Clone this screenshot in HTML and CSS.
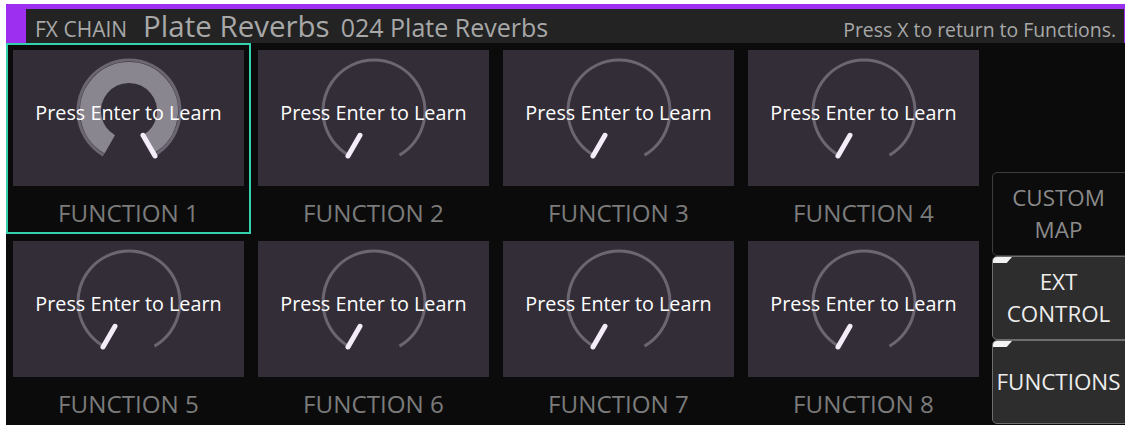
FILE: index.html
```html
<!DOCTYPE html>
<html>
<head>
<meta charset="utf-8">
<link rel="stylesheet" href="styles.css">
</head>
<body>
<div class="screen">
  <div class="topbar">
    <div class="header">
      <span class="hd-section">FX CHAIN</span>
      <span class="hd-title">Plate Reverbs</span>
      <span class="hd-preset">024 Plate Reverbs</span>
      <span class="hd-hint">Press X to return to Functions.</span>
    </div>
  </div>
  <div class="main">
    <div class="grid">
      <div class="cell selected">
        <div class="card">
          <svg class="knob" viewBox="0 0 120 120" width="120" height="120">
            <path class="track" d="M34.5 104.17 A51 51 0 1 1 85.5 104.17"/>
            <path class="fill" d="M40.75 93.34 A38.5 38.5 0 1 1 79.25 93.34"/>
            <line class="needle" x1="74" y1="84.25" x2="86" y2="105"/>
          </svg>
          <div class="learn">Press Enter to Learn</div>
        </div>
        <div class="label">FUNCTION 1</div>
      </div>
      <div class="cell">
        <div class="card">
          <svg class="knob" viewBox="0 0 120 120" width="120" height="120">
            <path class="track" d="M34.5 104.17 A51 51 0 1 1 85.5 104.17"/>
            <line class="needle" x1="46" y1="84.25" x2="34" y2="105"/>
          </svg>
          <div class="learn">Press Enter to Learn</div>
        </div>
        <div class="label">FUNCTION 2</div>
      </div>
      <div class="cell">
        <div class="card">
          <svg class="knob" viewBox="0 0 120 120" width="120" height="120">
            <path class="track" d="M34.5 104.17 A51 51 0 1 1 85.5 104.17"/>
            <line class="needle" x1="46" y1="84.25" x2="34" y2="105"/>
          </svg>
          <div class="learn">Press Enter to Learn</div>
        </div>
        <div class="label">FUNCTION 3</div>
      </div>
      <div class="cell">
        <div class="card">
          <svg class="knob" viewBox="0 0 120 120" width="120" height="120">
            <path class="track" d="M34.5 104.17 A51 51 0 1 1 85.5 104.17"/>
            <line class="needle" x1="46" y1="84.25" x2="34" y2="105"/>
          </svg>
          <div class="learn">Press Enter to Learn</div>
        </div>
        <div class="label">FUNCTION 4</div>
      </div>
      <div class="cell">
        <div class="card">
          <svg class="knob" viewBox="0 0 120 120" width="120" height="120">
            <path class="track" d="M34.5 104.17 A51 51 0 1 1 85.5 104.17"/>
            <line class="needle" x1="46" y1="84.25" x2="34" y2="105"/>
          </svg>
          <div class="learn">Press Enter to Learn</div>
        </div>
        <div class="label">FUNCTION 5</div>
      </div>
      <div class="cell">
        <div class="card">
          <svg class="knob" viewBox="0 0 120 120" width="120" height="120">
            <path class="track" d="M34.5 104.17 A51 51 0 1 1 85.5 104.17"/>
            <line class="needle" x1="46" y1="84.25" x2="34" y2="105"/>
          </svg>
          <div class="learn">Press Enter to Learn</div>
        </div>
        <div class="label">FUNCTION 6</div>
      </div>
      <div class="cell">
        <div class="card">
          <svg class="knob" viewBox="0 0 120 120" width="120" height="120">
            <path class="track" d="M34.5 104.17 A51 51 0 1 1 85.5 104.17"/>
            <line class="needle" x1="46" y1="84.25" x2="34" y2="105"/>
          </svg>
          <div class="learn">Press Enter to Learn</div>
        </div>
        <div class="label">FUNCTION 7</div>
      </div>
      <div class="cell">
        <div class="card">
          <svg class="knob" viewBox="0 0 120 120" width="120" height="120">
            <path class="track" d="M34.5 104.17 A51 51 0 1 1 85.5 104.17"/>
            <line class="needle" x1="46" y1="84.25" x2="34" y2="105"/>
          </svg>
          <div class="learn">Press Enter to Learn</div>
        </div>
        <div class="label">FUNCTION 8</div>
      </div>
    </div>
    <div class="side">
      <div class="btn btn-off">CUSTOM<br>MAP</div>
      <div class="btn btn-on">EXT<br>CONTROL</div>
      <div class="btn btn-on">FUNCTIONS</div>
    </div>
  </div>
</div>
</body>
</html>
```

FILE: styles.css
```css
* { box-sizing: border-box; }

html, body {
  margin: 0;
  padding: 0;
  background: #ffffff;
}

body {
  padding: 4px 0 0 6px;
  font-family: "Open Sans", "Noto Sans", sans-serif;
}

.screen {
  width: 1119px;
  height: 421px;
  background: #0b0b0b;
  overflow: hidden;
  display: flex;
  flex-direction: column;
}

.topbar {
  height: 39px;
  flex: none;
  background: #9d2ff0;
  padding: 5px 1px 0 20px;
}

.header {
  height: 34px;
  background: #232323;
  color: #a8a8a8;
  display: flex;
  align-items: baseline;
  padding: 0 8px 0 9px;
  white-space: nowrap;
  line-height: 34px;
}

.hd-section { font-size: 21px; }
.hd-title { font-size: 29.5px; margin-left: 16px; }
.hd-preset { font-size: 25px; margin-left: 11px; }
.hd-hint { font-size: 19.4px; margin-left: auto; }

.main {
  flex: 1;
  display: flex;
}

.grid {
  width: 980px;
  flex: none;
  display: grid;
  grid-template-columns: repeat(4, 245px);
  grid-template-rows: 191px 191px;
}

.cell {
  padding: 5px 5px 0;
  border: 2px solid transparent;
  display: flex;
  flex-direction: column;
}

.cell.selected {
  border-color: #34d1ad;
}

.card {
  height: 138px;
  background: #322d37;
  display: grid;
  justify-items: center;
  align-items: start;
}

.card > * {
  grid-area: 1 / 1;
}

.knob {
  margin-top: 1px;
  display: block;
}

.track {
  fill: none;
  stroke: #6b6671;
  stroke-width: 3;
}

.fill {
  fill: none;
  stroke: #8a8690;
  stroke-width: 21;
}

.needle {
  stroke: #f4ecf8;
  stroke-width: 5;
  stroke-linecap: round;
}

.learn {
  margin-top: 51px;
  color: #ffffff;
  font-size: 19.8px;
  line-height: 24px;
  white-space: nowrap;
}

.label {
  flex: 1;
  text-align: center;
  color: #7b7b7b;
  font-size: 24.2px;
  line-height: 38px;
  padding-top: 8px;
  white-space: nowrap;
}

.side {
  width: 139px;
  flex: none;
  margin-left: 6px;
  display: flex;
  flex-direction: column;
  justify-content: flex-end;
  padding-bottom: 1px;
}

.btn {
  height: 84px;
  border-radius: 5px;
  border: 1px solid #3d3d3d;
  display: flex;
  align-items: center;
  justify-content: center;
  text-align: center;
  font-size: 22.4px;
  line-height: 32px;
  padding-right: 6px;
  position: relative;
  overflow: hidden;
}

.btn-off {
  background: #0c0c0c;
  color: #8a8a8a;
}

.btn-on {
  background: #2d2d2d;
  border-color: #6e6e6e;
  color: #ececec;
}

.btn-on::before {
  content: "";
  position: absolute;
  left: 0;
  top: 0;
  width: 19px;
  height: 6px;
  background: #f2f2f2;
  clip-path: polygon(0 0, 100% 0, 72% 100%, 0 100%);
}
```
